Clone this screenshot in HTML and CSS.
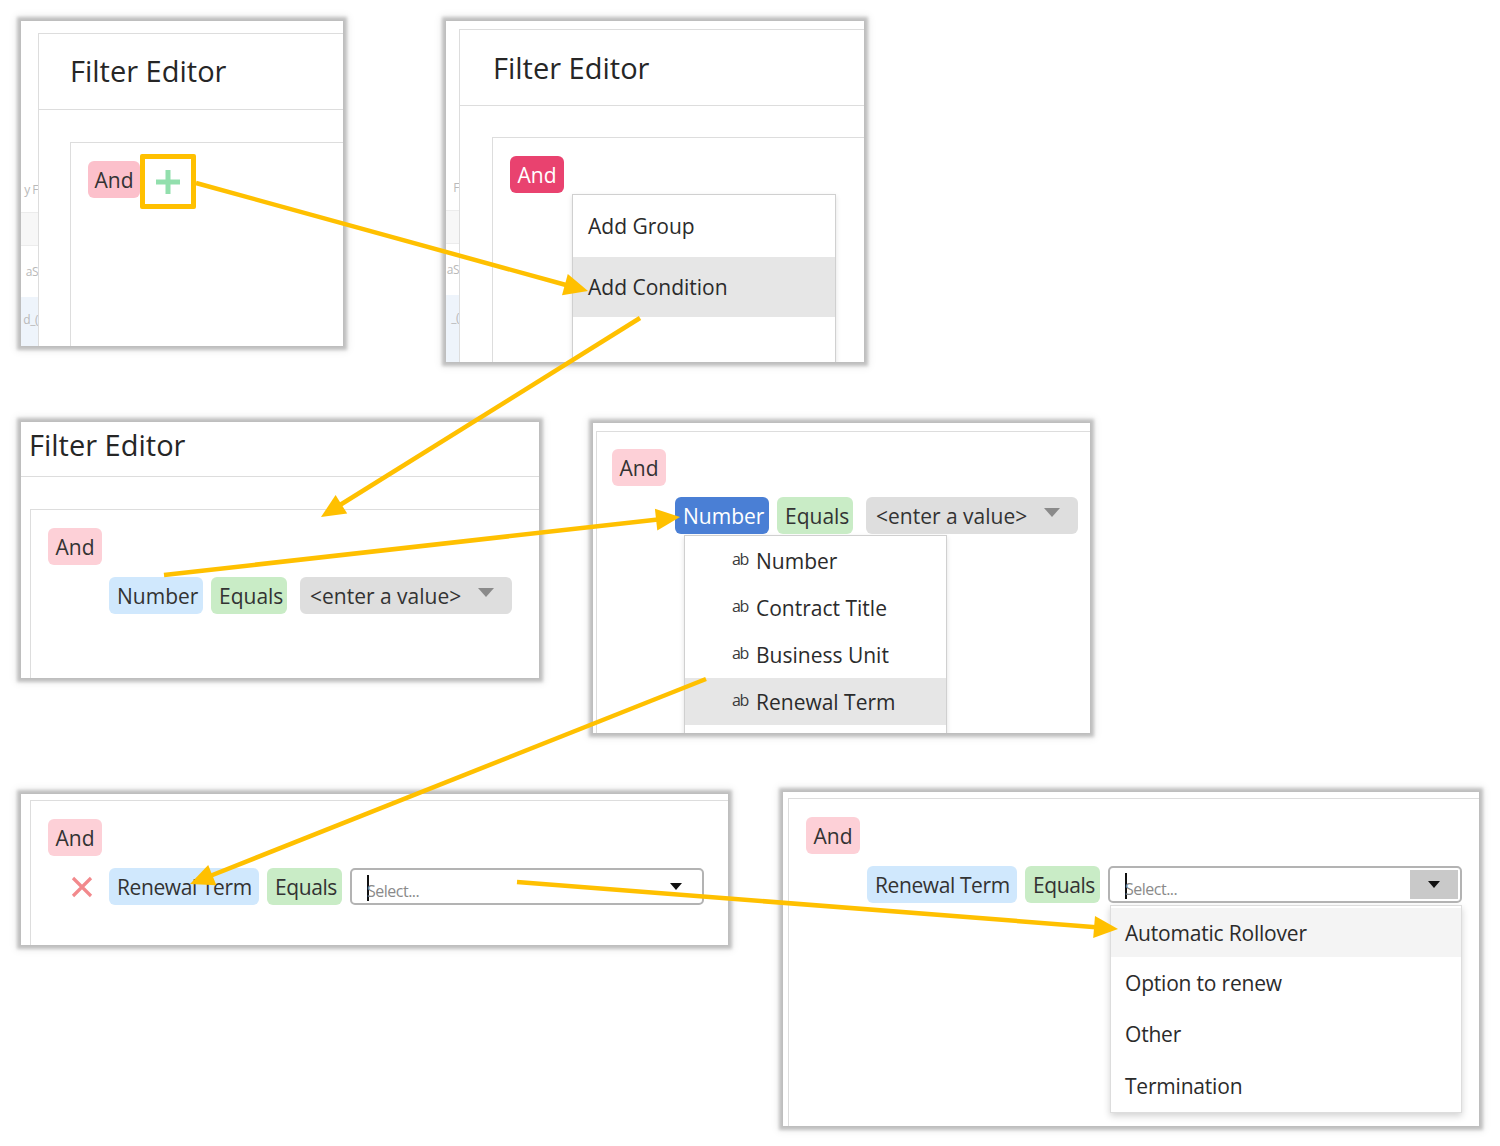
FILE: index.html
```html
<!DOCTYPE html>
<html lang="en">
<head>
<meta charset="utf-8">
<title>Filter Editor steps</title>
<link rel="stylesheet" href="styles.css">
</head>
<body>
<div class="canvas">

  <!-- Step 1 -->
  <section class="shot s1">
    <div class="strip s1-strip">
      <div class="bg-row r1"><span>y F</span></div>
      <div class="bg-row r2"></div>
      <div class="bg-row r3"><span>aS</span></div>
      <div class="bg-row r4"><span>d_(</span></div>
    </div>
    <div class="dialog d1">
      <div class="dlg-head h1">Filter Editor</div>
      <div class="dlg-body b1">
        <div class="group g1">
          <div class="group-row">
            <span class="badge and">And</span>
            <span class="plus-btn">
              <svg width="28" height="28" viewBox="0 0 28 28"><path d="M14 2v24M2 14h24" stroke="#92dfad" stroke-width="5" fill="none"/></svg>
            </span>
          </div>
        </div>
      </div>
    </div>
  </section>

  <!-- Step 2 -->
  <section class="shot s2">
    <div class="strip s2-strip">
      <div class="bg-row r1"><span>F</span></div>
      <div class="bg-row r2"></div>
      <div class="bg-row r3"><span>aS</span></div>
      <div class="bg-row r4"><span>_(</span></div>
    </div>
    <div class="dialog d2">
      <div class="dlg-head h2">Filter Editor</div>
      <div class="dlg-body b2">
        <div class="group g2">
          <span class="badge and-dark">And</span>
          <ul class="menu m2">
            <li class="menu-item">Add Group</li>
            <li class="menu-item hot">Add Condition</li>
            <li class="menu-item"></li>
          </ul>
        </div>
      </div>
    </div>
  </section>

  <!-- Step 3 -->
  <section class="shot s3">
    <div class="dlg-head h3">Filter Editor</div>
    <div class="b3">
      <div class="group g3">
        <span class="badge and">And</span>
        <div class="cond c3">
          <span class="badge field">Number</span>
          <span class="badge op">Equals</span>
          <span class="badge value">&lt;enter a value&gt;<i class="tri"></i></span>
        </div>
      </div>
    </div>
  </section>

  <!-- Step 4 -->
  <section class="shot s4">
    <div class="group g4">
      <span class="badge and">And</span>
      <div class="cond c4">
        <span class="badge field active">Number</span>
        <span class="badge op">Equals</span>
        <span class="badge value">&lt;enter a value&gt;<i class="tri"></i></span>
      </div>
      <ul class="menu m4">
        <li class="menu-item fi"><span class="ab">ab</span>Number</li>
        <li class="menu-item fi"><span class="ab">ab</span>Contract Title</li>
        <li class="menu-item fi"><span class="ab">ab</span>Business Unit</li>
        <li class="menu-item fi hot"><span class="ab">ab</span>Renewal Term</li>
        <li class="menu-item fi"></li>
      </ul>
    </div>
  </section>

  <!-- Step 5 -->
  <section class="shot s5">
    <div class="group g5">
      <span class="badge and">And</span>
      <div class="cond c5">
        <span class="remove">
          <svg width="24" height="24" viewBox="0 0 24 24"><path d="M3 3L21 21M21 3L3 21" stroke="#f2898c" stroke-width="3.2" fill="none"/></svg>
        </span>
        <span class="badge field">Renewal Term</span>
        <span class="badge op">Equals</span>
        <span class="select">
          <span class="caret"></span><span class="ph">Select...</span>
          <span class="sel-btn"><i class="tri-sm"></i></span>
        </span>
      </div>
    </div>
  </section>

  <!-- Step 6 -->
  <section class="shot s6">
    <div class="group g6">
      <span class="badge and">And</span>
      <div class="cond c6">
        <span class="badge field">Renewal Term</span>
        <span class="badge op">Equals</span>
        <div class="select-wrap">
          <span class="select open">
            <span class="caret"></span><span class="ph">Select...</span>
            <span class="sel-btn gray"><i class="tri-sm"></i></span>
          </span>
          <ul class="options">
            <li class="opt hot">Automatic Rollover</li>
            <li class="opt">Option to renew</li>
            <li class="opt">Other</li>
            <li class="opt">Termination</li>
          </ul>
        </div>
      </div>
    </div>
  </section>

  <!-- Annotation arrows -->
  <svg class="arrows" width="1500" height="1146" viewBox="0 0 1500 1146">
    <g stroke="#ffc000" stroke-width="4.5" fill="none" stroke-linecap="butt">
      <line x1="196" y1="183" x2="566" y2="285"/>
      <line x1="640" y1="318" x2="340" y2="505"/>
      <line x1="164" y1="575" x2="658" y2="519.5"/>
      <line x1="706" y1="679" x2="210" y2="876"/>
      <line x1="517" y1="882" x2="1096" y2="927.2"/>
    </g>
    <g fill="#ffc000">
      <polygon points="588,291 562,295.2 567.8,274"/>
      <polygon points="321,517 335.6,495 347.2,513.6"/>
      <polygon points="680,517 657.3,530.6 654.9,508.8"/>
      <polygon points="190,884 208.2,864.9 216.4,885.3"/>
      <polygon points="1118,929 1093.2,938.1 1095,916.1"/>
    </g>
  </svg>
</div>
</body>
</html>
```

FILE: styles.css
```css
* { box-sizing: border-box; }
html, body { margin: 0; padding: 0; background: #fff; }
body {
  font-family: "Open Sans", "Noto Sans", "DejaVu Sans", sans-serif;
  color: #333;
}
.canvas { position: relative; width: 1500px; height: 1146px; overflow: hidden; }

/* screenshot panels placed on a free canvas */
.shot {
  position: absolute;
  background: #fff;
  overflow: hidden;
  box-shadow: 0 0 3px 4px rgba(0,0,0,0.2), 0 0 8px 5px rgba(0,0,0,0.08);
}
.s1 { left: 21px; top: 21px; width: 322px; height: 325px; display: flex; }
.s2 { left: 446px; top: 21px; width: 418px; height: 341px; display: flex; }
.s3 { left: 21px; top: 422px; width: 518px; height: 256px; }
.s4 { left: 593px; top: 423px; width: 497px; height: 310px; }
.s5 { left: 21px; top: 794px; width: 707px; height: 151px; }
.s6 { left: 783px; top: 792px; width: 696px; height: 334px; }

/* faint background page fragments */
.strip { flex: none; display: flex; flex-direction: column; }
.s1-strip { width: 17px; }
.s2-strip { width: 13px; }
.bg-row {
  display: flex; justify-content: flex-end; align-items: center;
  white-space: nowrap;
  font-size: 12px; color: #b9b9b9; letter-spacing: -0.5px;
}
.bg-row.r1 { height: 192px; align-items: flex-end; padding-bottom: 14px; border-bottom: 1px solid #ececec; }
.bg-row.r2 { height: 33px; background: #f7f7f7; border-bottom: 1px solid #ececec; }
.bg-row.r3 { height: 51px; }
.bg-row.r4 { flex: 1; background: #eef4fb; align-items: flex-start; padding-top: 14px; }
.s2-strip .bg-row.r1 { height: 190px; }

/* dialog */
.dialog { flex: 1; border-left: 1px solid #ddd; border-top: 1px solid #ddd; }
.d1 { margin-top: 12px; }
.d2 { margin-top: 8px; }
.dlg-head {
  font-size: 29px; line-height: 1; color: #262626;
  display: flex; align-items: center;
  border-bottom: 1px solid #ddd;
}
.h1 { height: 76px; padding-left: 31px; padding-bottom: 2px; }
.h2 { height: 76px; padding-left: 33px; }
.h3 { height: 55px; padding-left: 8px; padding-top: 4px; padding-bottom: 13px; }
.b1 { padding: 32px 0 0 31px; }
.b2 { padding: 31px 0 0 32px; }
.b3 { padding: 32px 0 0 9px; }

/* filter group container */
.group {
  border-left: 1px solid #ddd; border-top: 1px solid #ddd;
  height: 600px;
}
.g1 { padding: 18px 0 0 17px; }
.g2 { padding: 18px 0 0 17px; }
.g3 { padding: 18px 0 0 17px; }
.g4 { margin: 8px 0 0 3px; padding: 17px 0 0 15px; }
.g5 { margin: 6px 0 0 9px; padding: 18px 0 0 17px; }
.g6 { margin: 6px 0 0 5px; padding: 18px 0 0 17px; }

.group-row { display: flex; align-items: flex-start; }

/* badges */
.badge {
  display: inline-flex; align-items: center;
  height: 37px; padding: 0 8px;
  border-radius: 6px;
  font-size: 21px; color: #333;
  white-space: nowrap;
}
.and { background: #fdd0d7; width: 54px; justify-content: center; padding: 0; }
.s1 .and { background: #fcc0cb; width: 52px; }
.and-dark { background: #e9426f; color: #fff; width: 54px; justify-content: center; padding: 0; }
.field { background: #d0e8fd; }
.field.active { background: #4a7fd5; color: #fff; }
.op { background: #c9ecc6; }
.value { background: #dedede; width: 212px; justify-content: space-between; padding: 0 18px 0 10px; }
.tri {
  width: 0; height: 0;
  border-left: 8px solid transparent; border-right: 8px solid transparent;
  border-top: 9px solid #8a8a8a;
  margin-top: -6px;
}

.plus-btn {
  display: inline-flex; align-items: center; justify-content: center;
  width: 56px; height: 55px;
  border: 5px solid #ffc000; border-radius: 2px;
  margin-top: -7px;
  background: #fff;
}

/* condition rows */
.cond { display: flex; align-items: center; }
.c3 { margin: 12px 0 0 61px; gap: 8px; }
.c3 .value, .c4 .value { margin-left: 5px; }
.c4 { margin: 11px 0 0 63px; gap: 8px; }
.c5 { margin: 12px 0 0 22px; gap: 8px; }
.c5 .field { margin-left: 7px; }
.c6 { margin: 12px 0 0 61px; gap: 8px; align-items: flex-start; }
.c5 .field, .c6 .field { width: 150px; letter-spacing: -0.4px; }
.c5 .op, .c6 .op { width: 75px; letter-spacing: -0.4px; }
.c3 .field, .c4 .field { width: 94px; }
.c3 .op, .c4 .op { width: 76px; }

.remove { display: inline-flex; width: 24px; height: 24px; }

/* menus */
.menu {
  list-style: none; margin: 0; padding: 0;
  background: #fff;
  border: 1px solid #d0d0d0;
  box-shadow: 0 2px 5px rgba(0,0,0,0.12);
}
.m2 { margin: 1px 0 0 62px; width: 264px; }
.menu-item {
  font-size: 21px; color: #2b2b2b;
  display: flex; align-items: center;
  padding-left: 15px;
}
.m2 .menu-item { height: 62px; }
.m2 .menu-item.hot { height: 60px; }
.menu-item.hot { background: #e6e6e6; }
.m4 { margin: 1px 0 0 72px; width: 263px; padding-top: 1px; }
.m4 .menu-item { height: 47px; padding-left: 47px; }
.ab { font-size: 16px; color: #3a3a3a; width: 24px; letter-spacing: -1.5px; margin-top: -4px; }

/* select input */
.select {
  position: relative;
  display: flex; align-items: center;
  width: 354px; height: 37px;
  border: 2px solid #b3b3b3; border-radius: 5px;
  background: #fff;
  padding-left: 15px;
}
.caret { width: 2px; height: 26px; background: #111; margin-top: 2px; }
.ph { font-size: 16px; color: #8a8a8a; margin-left: -2px; margin-top: 8px; letter-spacing: -0.5px; }
.sel-btn {
  margin-left: auto;
  display: flex; align-items: center; justify-content: center;
  width: 48px; height: 29px; margin-right: 2px;
}
.sel-btn.gray { background: #c9c9c9; }
.tri-sm {
  width: 0; height: 0;
  border-left: 6px solid transparent; border-right: 6px solid transparent;
  border-top: 7px solid #111;
}
.s5 .sel-btn { width: 40px; margin-right: 6px; }

.select-wrap { display: flex; flex-direction: column; }
.options {
  list-style: none; margin: 2px 0 0 2px; padding: 2px 0 0;
  width: 352px;
  border: 1px solid #ddd;
  background: #fff;
  box-shadow: 0 3px 7px rgba(0,0,0,0.18);
}
.opt {
  height: 51.5px; display: flex; align-items: center;
  padding-left: 14px;
  font-size: 21px; color: #2b2b2b; letter-spacing: -0.2px;
}
.opt.hot { background: #f4f4f4; height: 49px; }

/* annotation overlay */
.arrows { position: absolute; left: 0; top: 0; pointer-events: none; }
```
